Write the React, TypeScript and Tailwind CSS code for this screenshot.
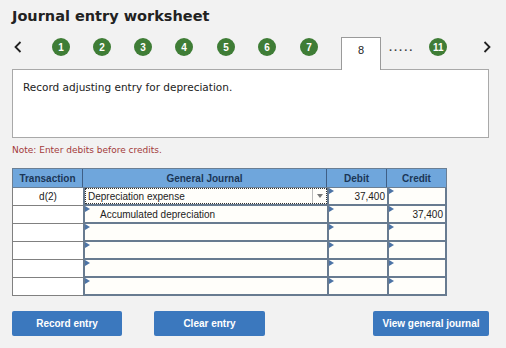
import React from "react";

const Tri = () => (
  <span className="absolute left-0 top-0 w-0 h-0 border-t-[3px] border-b-[3px] border-l-[5px] border-t-transparent border-b-transparent border-l-[#4d74a6]" />
);

const Circle = ({ n, ml }: { n: string; ml: string }) => (
  <div
    className={`${ml} w-[18px] h-[18px] rounded-full bg-[#3f7d36] text-white text-[10px] font-bold flex items-center justify-center`}
    style={{ fontFamily: "'Liberation Sans', Arial, sans-serif" }}
  >
    {n}
  </div>
);

type Row = { t: string; gj: string; indent?: boolean; debit: string; credit: string; focus?: boolean };

const rows: Row[] = [
  { t: "d(2)", gj: "Depreciation expense", debit: "37,400", credit: "", focus: true },
  { t: "", gj: "Accumulated depreciation", indent: true, debit: "", credit: "37,400" },
  { t: "", gj: "", debit: "", credit: "" },
  { t: "", gj: "", debit: "", credit: "" },
  { t: "", gj: "", debit: "", credit: "" },
  { t: "", gj: "", debit: "", credit: "" },
];

export default function App() {
  return (
    <div
      className="w-[506px] h-[348px] bg-[#f2f2f2] overflow-hidden text-[#111]"
      style={{ fontFamily: "'Liberation Sans', Arial, sans-serif" }}
    >
      <div className="pl-3 pt-[6px]">
        <h1
          className="text-[14.5px] leading-[20px] font-bold text-[#222]"
          style={{ fontFamily: "'DejaVu Sans', Verdana, sans-serif" }}
        >
          Journal entry worksheet
        </h1>
      </div>

      {/* nav */}
      <div className="flex items-start h-[33px] mt-[11px] relative z-10 pl-3">
        <div className="w-[24px] h-[20px] flex items-center justify-start pl-[2px]">
          <svg width="8" height="12" viewBox="0 0 8 12">
            <path d="M6.5 1 L1.5 6 L6.5 11" stroke="#222" strokeWidth="1.8" fill="none" />
          </svg>
        </div>
        <div className="flex items-center h-[20px]">
          <Circle n="1" ml="ml-[16px]" />
          <Circle n="2" ml="ml-[23px]" />
          <Circle n="3" ml="ml-[23px]" />
          <Circle n="4" ml="ml-[23px]" />
          <Circle n="5" ml="ml-[24px]" />
          <Circle n="6" ml="ml-[23px]" />
          <Circle n="7" ml="ml-[24px]" />
        </div>
        <div className="ml-[23px] w-[40px] h-[33px] bg-white border border-b-0 border-[#9a9a9a] flex justify-center pt-[4px] text-[11px] text-[#222]">
          8
        </div>
        <div className="ml-[8px] h-[20px] flex items-center text-[11px] font-bold tracking-[2px] text-[#444]">.....</div>
        <div className="flex items-center h-[20px]">
          <Circle n="11" ml="ml-[15px]" />
        </div>
        <div className="ml-[36px] h-[20px] flex items-center">
          <svg width="8" height="12" viewBox="0 0 8 12">
            <path d="M1.5 1 L6.5 6 L1.5 11" stroke="#222" strokeWidth="1.8" fill="none" />
          </svg>
        </div>
      </div>

      {/* instruction box */}
      <div className="ml-3 -mt-px w-[477px] h-[69px] bg-white border border-[#a9a9a9] pl-[10px] pt-[10px]">
        <p
          className="text-[10.5px] text-[#222]"
          style={{ fontFamily: "'DejaVu Sans', Verdana, sans-serif" }}
        >
          Record adjusting entry for depreciation.
        </p>
      </div>

      <p
        className="ml-3 mt-[6px] text-[9px] leading-[12px] text-[#a33a3a]"
        style={{ fontFamily: "'DejaVu Sans', Verdana, sans-serif" }}
      >
        Note: Enter debits before credits.
      </p>

      {/* table */}
      <div className="ml-3 mt-[12px] w-[435px]">
        <div className="flex h-[20px] bg-[#6fa6dc] border border-[#6b7f94] text-[10px] font-bold text-[#1b3657]">
          <div className="w-[70px] flex items-center justify-center border-r border-[#3f5f86]">Transaction</div>
          <div className="w-[244px] flex items-center justify-center border-r border-[#3f5f86]">General Journal</div>
          <div className="w-[60px] flex items-center justify-center border-r border-[#3f5f86]">Debit</div>
          <div className="w-[59px] flex items-center justify-center">Credit</div>
        </div>
        {rows.map((r, i) => (
          <div key={i} className="flex h-[18px] text-[10px] text-[#222]">
            <div className="w-[71px] bg-white border-l border-b border-[#808080] flex items-center justify-center">
              {r.t}
            </div>
            <div className="w-[244px] relative border-l-2 border-b-2 border-[#687b90] bg-[#fffefa]">
              {r.focus ? (
                <div className="absolute inset-0 border border-dotted border-[#333] flex items-center">
                  <span className="pl-[2px]">{r.gj}</span>
                  <div className="ml-auto h-full w-[14px] border-l border-[#bbb] flex items-center justify-center">
                    <span className="w-0 h-0 border-l-[3px] border-r-[3px] border-t-[4px] border-l-transparent border-r-transparent border-t-[#777]" />
                  </div>
                </div>
              ) : (
                <>
                  <Tri />
                  <div className={`h-full flex items-center ${r.indent ? "pl-[15px]" : "pl-[3px]"}`}>{r.gj}</div>
                </>
              )}
            </div>
            <div className="w-[60px] relative border-l-2 border-b-2 border-[#687b90] bg-[#fffefa] flex items-center justify-end pr-[2px]">
              <Tri />
              {r.debit}
            </div>
            <div className="w-[60px] relative border-l-2 border-r-2 border-b-2 border-[#687b90] bg-[#fffefa] flex items-center justify-end pr-[2px]">
              <Tri />
              {r.credit}
            </div>
          </div>
        ))}
      </div>

      {/* buttons */}
      <div className="flex ml-3 mt-[15px] w-[477px] text-[10px] font-bold text-white">
        <button className="w-[110px] h-[25px] bg-[#3b78be] rounded-[2px]">Record entry</button>
        <button className="ml-[32px] w-[111px] h-[25px] bg-[#3b78be] rounded-[2px]">Clear entry</button>
        <button className="ml-auto w-[116px] h-[25px] bg-[#3b78be] rounded-[2px]">View general journal</button>
      </div>
    </div>
  );
}
